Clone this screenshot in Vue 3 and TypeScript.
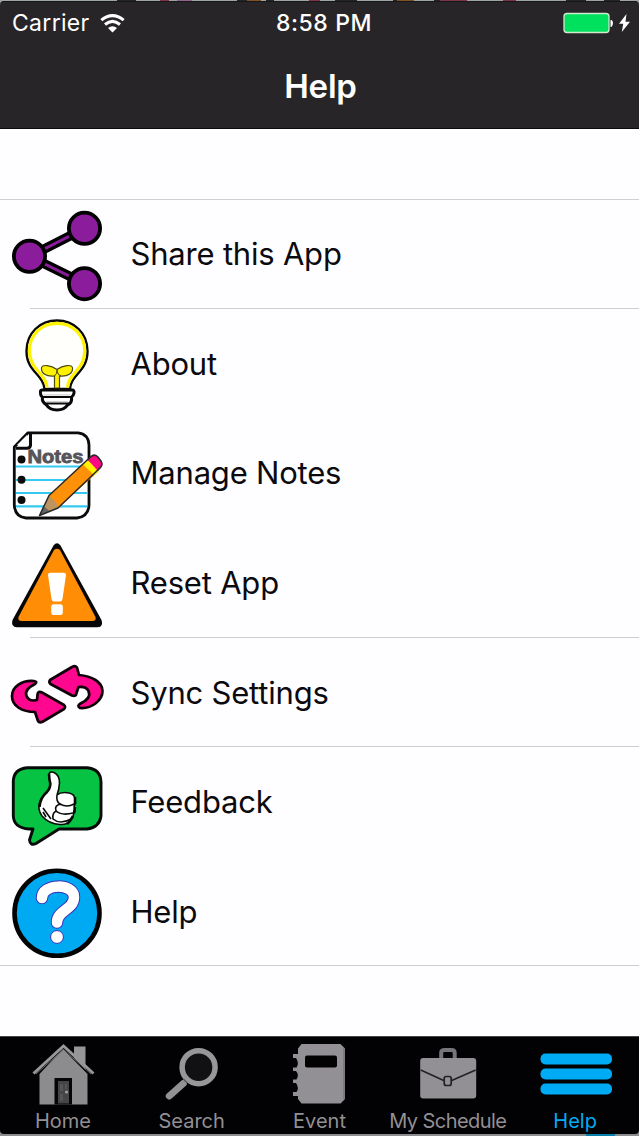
<script setup lang="ts">
interface MenuRow {
  id: string
  label: string
  top: number
}

interface Tab {
  id: string
  label: string
  active?: boolean
}

const rows: MenuRow[] = [
  { id: 'share', label: 'Share this App', top: 199 },
  { id: 'about', label: 'About', top: 309 },
  { id: 'notes', label: 'Manage Notes', top: 418 },
  { id: 'reset', label: 'Reset App', top: 528 },
  { id: 'sync', label: 'Sync Settings', top: 638 },
  { id: 'feedback', label: 'Feedback', top: 747 },
  { id: 'help', label: 'Help', top: 857 },
]

const tabs: Tab[] = [
  { id: 'home', label: 'Home' },
  { id: 'search', label: 'Search' },
  { id: 'event', label: 'Event' },
  { id: 'schedule', label: 'My Schedule' },
  { id: 'more', label: 'Help', active: true },
]
</script>

<template>
  <div class="screen">
    <header class="top">
      <svg class="backdrop" viewBox="0 0 639 4">
        <rect width="639" height="4" fill="#9fa3a1" />
        <path d="M117 0h19v2h-19zM237 0h14v2h-14zM266 0h8v2h-8zM335 0h22v2h-22zM393 0h14v2h-14zM434 0h12v2h-12zM566 0h20v2h-20zM604 0h16v2h-16z" fill="#242526" />
        <path d="M177 0h15v2h-15z" fill="#92648e" />
        <path d="M247 0h14v2h-14zM397 0h17v2h-17z" fill="#805326" />
        <path d="M160 0h9v2h-9zM309 0h11v2h-11zM440 0h27v2h-27zM503 0h13v2h-13z" fill="#7d3547" />
      </svg>
      <div class="chrome">
        <div class="status">
          <div class="carrier">
            <span>Carrier</span>
            <svg class="wifi" viewBox="100 11 26 21">
              <g fill="none" stroke="#fff" stroke-width="3">
                <path d="M101.300 18.200Q112.500 9 123.700 18.200" />
                <path d="M105 22.500Q112.500 16.200 120 22.500" />
              </g>
              <path d="M108 26Q112.500 22.300 117 26L112.500 30.500Z" fill="#fff" />
            </svg>
          </div>
          <span class="clock">8:58 PM</span>
          <svg class="battery" viewBox="562 10 70 24">
            <rect x="564" y="12.500" width="45" height="19" rx="3" fill="#00e25d" stroke="#d3e9ce" stroke-width="1.300" />
            <path d="M610.500 19h1q1.500 1 1.500 3t-1.500 4h-1z" fill="#fff" />
            <path d="M626.500 13L619 22.800h4.200L621.800 31 630 20.700h-4.500Z" fill="#fff" />
          </svg>
        </div>
        <h1>Help</h1>
      </div>
    </header>

    <main>
      <ul class="menu">
        <li v-for="row in rows" :key="row.id" :class="['row', row.id]">
          <svg class="icon" :viewBox="`0 ${row.top} 114 109`">
            <g v-if="row.id === 'share'">
              <path d="M84.500 228.500L29.500 256.500L84.500 283.500" fill="none" stroke="#000" stroke-width="9.500" />
              <path d="M84.500 228.500L29.500 256.500L84.500 283.500" fill="none" stroke="#8b1c9b" stroke-width="3" />
              <g fill="#8b1c9b" stroke="#000" stroke-width="3.800">
                <circle cx="84.500" cy="228.300" r="15.600" />
                <circle cx="29.500" cy="256.300" r="15.600" />
                <circle cx="84.500" cy="283.700" r="15.600" />
              </g>
            </g>

            <g v-else-if="row.id === 'about'">
              <path d="M44.500 389C43.500 374 26.500 372 26.500 351C26.500 333 40 320.500 57 320.500S87.500 333 87.500 351C87.500 372 71 374 70 389Z" fill="#fffffb" stroke="#080808" stroke-width="2.400" />
              <path d="M47 387.500C46 373 29.500 370 29.500 351C29.500 335 41 323.300 57 323.300S84.700 335 84.700 351C84.700 370 68.500 373 67.500 387.500" fill="none" stroke="#fff200" stroke-width="3.200" />
              <path d="M54.500 388V376C46 377 41 373 41.500 368C42 364 51 365 57 369.500C63 365 72 364 72.500 368C73 373 68 377 59.500 376V388Z" fill="#fff200" stroke="#4d4a14" stroke-width="1.200" />
              <path d="M54.500 376Q57 374 57 370Q57 375 61 376" fill="none" stroke="#4d4a14" />
              <path d="M42 390H72Q74.500 390 74 393Q73.500 396 71.500 397Q72.500 403 67.500 405Q64.500 410 57 410T46.500 405Q41.500 402 42.500 397Q40.500 396 40.500 393Q40 390 42 390Z" fill="#fff" stroke="#080808" stroke-width="3" />
              <path d="M42 397H73M44 403.500H70" stroke="#080808" stroke-width="2.200" />
              <path d="M44 394.800H70M46 401.500H68" stroke="#d1d1d1" stroke-width="1.200" />
            </g>

            <g v-else-if="row.id === 'notes'">
              <path d="M28 432.800H78Q88.500 434 89 445V505Q88.500 516.500 77 518H26Q15 517 14.300 505V447Z" fill="#fff" stroke="#0b0b0b" stroke-width="2.800" stroke-linejoin="round" />
              <path d="M16 466.500H87M16 480H87M16 493H87M16 506.300H87" stroke="#36c9f0" stroke-width="2.200" />
              <path d="M30.500 433.500V445.500Q30 448.200 27 448.200H16" fill="none" stroke="#0b0b0b" stroke-width="3" />
              <path d="M17 445L27 435V443Q27 445 25 445Z" fill="#fff" />
              <g fill="#0b0b0b">
                <circle cx="21.500" cy="459.500" r="4" />
                <circle cx="21.500" cy="479.800" r="4" />
                <circle cx="21.500" cy="500" r="4" />
              </g>
              <text x="27.500" y="463.300" textLength="56" lengthAdjust="spacingAndGlyphs" class="paper">Notes</text>
              <path d="M39.500 515.500L49 495.500L83.500 463.500L94.500 475L58 508Z" fill="#ff9108" />
              <path d="M39.500 515.500L49 495.500L53 499.500L56 502L58 508Z" fill="#bd9360" />
              <path d="M39.500 515.500L44 506.500L49.500 511Z" fill="#666" />
              <path d="M83 464.500L88 460L99 471L94.500 475.500Z" fill="#fff200" />
              <path d="M88 460L92 456Q94 454.500 97 456L101.500 461.500Q103.500 464 101.500 467L98 471Z" fill="#fc0885" />
              <path d="M39.500 515.500L49 495.500L90.500 457Q94 453.500 97.500 456.500L101 461Q103 464.500 100.500 467.500L58 508Z" fill="none" stroke="#282828" stroke-width="1.500" stroke-linejoin="round" />
            </g>

            <g v-else-if="row.id === 'reset'">
              <path d="M53.500 545.500Q57 541 60.500 545.500L101.500 620Q103 624.500 100.500 626.500Q100 627.200 97 627.200H17Q10.500 627 12.500 620Z" fill="#060606" />
              <path d="M54 550Q57 547.500 60 550L95.500 617Q96.500 620.500 93 621H21Q17.500 620.500 18.500 617Z" fill="#ff8d05" />
              <path d="M50 572.800H64Q66.200 573 66 575L62.500 599Q62 601.500 60 601.500H54Q52 601.500 51.500 599L48 575Q47.800 573 50 572.800Z" fill="#fff" />
              <rect x="51.200" y="604.300" width="11.600" height="10.700" rx="2.500" fill="#fff" />
            </g>

            <g v-else-if="row.id === 'sync'" fill="#ff078f" stroke="#100008" stroke-width="2.700" stroke-linejoin="round">
              <path d="M34 681C22 680 12 686.500 12 696C12 706 22 712 35 712L38 721Q39.500 723.500 43 721.500L64 709Q66 707 64 705L42 692.500Q38 690.500 37.500 694.500L37 700Q29 702 26.500 696C24.500 691 29 687 35 684Q38 681.500 34 681Z" />
              <path d="M80 708C92 709 102.500 700 102.500 691C102.500 682 91.500 676 79 675L77 667.500Q75 665 72 667L50 680Q48.500 682 50.500 684L72 695.500Q76 697 76.500 693L78.500 687Q86 686 88.500 691C91 697 86 701 80.500 703.500Q76.500 706 80 708Z" />
            </g>

            <g v-else-if="row.id === 'feedback'">
              <path d="M27 767.800H87Q100.500 769 101 782V816Q99.500 827.500 87 829H59L36 843.500Q30 846 29.500 840L33 829H29Q14 828 13.300 816V781Q14 769 27 767.800Z" fill="#06c344" stroke="#070b08" stroke-width="2.900" stroke-linejoin="round" />
              <path d="M49 774Q50 771 54 772.500Q59.500 775 59.500 783Q59 790 57 795Q61 791.500 69 793Q75 794 75 800Q76 804 74 806Q76 811 73.500 814Q73.500 818 70 820Q68 825 60 824.500Q49 824 42 816Q37 809 40 801Q42 796 48.500 790Q52 785 49 779Z" fill="#fff" stroke="#070b08" stroke-width="1.600" />
              <path d="M49 774L49.500 780Q52 786 47 792Q40 798 39.500 807" fill="none" stroke="#070b08" stroke-width="2.600" />
              <path d="M74 804Q67 808 60 804Q56 802 57 795M61 804Q54 805 56 811Q62 816 73 813M57 811Q52 812 53 819Q60 825 71 819M43 808L51 819M43 812L46 817" fill="none" stroke="#070b08" stroke-width="1.600" />
              <path d="M75 797V804M75 807L74 813M73 816L70 821L67 824" stroke="#070b08" stroke-width="2.600" fill="none" />
            </g>

            <g v-else>
              <circle cx="57" cy="913.200" r="42.500" fill="#00aaf2" stroke="#030303" stroke-width="4.600" />
              <path d="M42 898C42 883 74 883 74 897C74 910 57 910 57 922.500" fill="none" stroke="#3931b7" stroke-width="12.500" stroke-linecap="round" />
              <path d="M42 898C42 883 74 883 74 897C74 910 57 910 57 922.500" fill="none" stroke="#fff" stroke-width="10.500" stroke-linecap="round" />
              <circle cx="57" cy="937" r="6.400" fill="#fff" stroke="#3931b7" />
            </g>
          </svg>
          <span class="label">{{ row.label }}</span>
        </li>
      </ul>
    </main>

    <footer>
      <nav class="tabs">
        <a v-for="tab in tabs" :key="tab.id" :class="['tab', tab.id, { active: tab.active }]">
          <svg v-if="tab.id === 'home'" class="glyph" viewBox="32 1042 64 64">
            <path d="M39.500 1074L63 1049L87.500 1074V1104.500H39.500Z" fill="#8c8b8e" />
            <path d="M74 1046.500H85.500V1070L74 1058Z" fill="#969598" />
            <path d="M33.500 1073.500L63.500 1046L93.500 1073.500" fill="none" stroke="#979698" stroke-width="3" />
            <path d="M36 1074L63.500 1049.500L91 1074" fill="none" stroke="#69686a" />
            <rect x="54.500" y="1078" width="17.500" height="26.500" fill="#050505" />
            <rect x="58" y="1081" width="11" height="22.500" fill="#454446" />
            <path d="M60 1084h3v7h-3zM65 1084h2v5h-2zM60 1094h3v7h-3z" fill="#555456" />
            <circle cx="66.500" cy="1092" r="1.500" fill="#a3a2a5" />
          </svg>
          <svg v-else-if="tab.id === 'search'" class="glyph" viewBox="159.700 1042 64 64">
            <path d="M183 1083.500L169 1096" stroke="#929194" stroke-width="7" stroke-linecap="round" />
            <circle cx="198.300" cy="1067.200" r="16.500" fill="#111113" stroke="#979698" stroke-width="5.500" />
            <path d="M183 1079L187 1083" stroke="#555" stroke-width="1.200" />
          </svg>
          <svg v-else-if="tab.id === 'event'" class="glyph" viewBox="287.500 1042 64 64">
            <path d="M302 1044H341L345.500 1048.500V1099L341 1103.500H302L298.500 1099V1096H293.500V1092H297Q300 1088 296.500 1083H293.500V1079.500H297Q300 1075 296.500 1071H293.500V1067.500H297Q300 1063 296.500 1058H293.500V1054H298.500V1048.500Z" fill="#929094" />
            <path d="M344.500 1048V1099" stroke="#77757a" stroke-width="1.500" />
            <rect x="305.500" y="1055.500" width="32" height="12" rx="2" fill="#020203" />
          </svg>
          <svg v-else-if="tab.id === 'schedule'" class="glyph" viewBox="415.300 1042 64 64">
            <path d="M441.500 1059V1052.500Q441.500 1050 445 1050H452Q455 1050 455 1053V1059" fill="none" stroke="#77757a" stroke-width="4" />
            <rect x="420.500" y="1058" width="56" height="40.500" rx="3" fill="#929094" />
            <path d="M421 1070L444 1080.500M452 1080.500L476 1070" stroke="#222124" stroke-width="1.600" fill="none" />
            <rect x="444.500" y="1076.500" width="7" height="9" rx="2" fill="#929094" stroke="#222124" stroke-width="1.700" />
          </svg>
          <svg v-else class="glyph wide" viewBox="536 1042 78 64">
            <g fill="#00abf5">
              <rect x="540.500" y="1053.500" width="71.500" height="11" rx="5" />
              <rect x="540.500" y="1068.500" width="71.500" height="11" rx="5" />
              <rect x="540.500" y="1083.500" width="71.500" height="11" rx="5" />
            </g>
          </svg>
          <span class="caption">{{ tab.label }}</span>
        </a>
      </nav>
    </footer>
  </div>
</template>

<style scoped>
.screen {
  display: flex;
  flex-direction: column;
  height: 1136px;
  background: #fefdff;
  font-family: Inter, "Liberation Sans", sans-serif;
  color: #0b0a0e;
}

.top {
  position: relative;
  height: 129px;
  box-sizing: border-box;
  padding-top: 1px;
}

.backdrop {
  position: absolute;
  top: 0;
  left: 0;
  width: 639px;
  height: 4px;
}

.chrome {
  position: relative;
  height: 128px;
  box-sizing: border-box;
  border-top: 1px solid #151718;
  border-bottom: 1px solid #0b0a0c;
  border-radius: 4px 4px 0 0;
  background: #272528;
  color: #fff;
}

.status {
  display: grid;
  grid-template-columns: 1fr auto 1fr;
  align-items: center;
  height: 42px;
  padding: 0 7px 0 12px;
  font-size: 23px;
}

.carrier {
  display: flex;
  align-items: center;
  gap: 10px;
}

.carrier span {
  letter-spacing: 0.3px;
}

.wifi {
  width: 26px;
  height: 21px;
}

.clock {
  margin-left: 4px;
  font-weight: 500;
  letter-spacing: 0.6px;
}

.battery {
  width: 70px;
  height: 24px;
  justify-self: end;
}

h1 {
  margin: 20px 0 0;
  padding-left: 2px;
  line-height: 44px;
  font-size: 33px;
  font-weight: 600;
  text-align: center;
  letter-spacing: -0.2px;
}

main {
  flex: 1;
  padding-top: 70px;
}

.menu {
  margin: 0;
  padding: 0;
  list-style: none;
  box-shadow: inset 0 1px #d0ced3;
}

.row {
  display: flex;
  align-items: flex-start;
  height: 110px;
  box-sizing: border-box;
}

.about,
.sync,
.help {
  height: 109px;
}

.icon {
  width: 114px;
  height: 109px;
  margin-right: 16.500px;
  flex: none;
}

.help .icon {
  margin-bottom: -1px;
}

.share,
.reset,
.sync {
  background: linear-gradient(#cfcdd1, #cfcdd1) 30px 100% / 100% 1px no-repeat;
}

.help {
  border-bottom: 1px solid #cfcdd1;
}

.label {
  font-size: 31px;
  line-height: 109px;
  letter-spacing: -0.2px;
}

.paper {
  font: bold 18px "Liberation Sans", sans-serif;
  fill: #565459;
  stroke: #565459;
  stroke-width: 0.8px;
}

footer {
  height: 100px;
  box-sizing: border-box;
  padding-bottom: 2px;
  background: linear-gradient(90deg, #8d8c90 586px, #087fa9 586px, #087fa9 615px, #8d8c90 615px);
}

.tabs {
  display: grid;
  grid-template-columns: repeat(5, 1fr);
  height: 98px;
  box-sizing: border-box;
  border-top: 1px solid #454446;
  border-radius: 0 0 4px 4px;
  background: #020103;
}

.tab {
  display: flex;
  flex-direction: column;
  align-items: center;
  padding-top: 5px;
  color: #929094;
}

.tab.active {
  color: #00abf5;
}

.glyph {
  width: 64px;
  height: 64px;
  flex: none;
}

.wide {
  width: 78px;
}

.caption {
  margin-top: 2.500px;
  font-size: 20px;
  line-height: 24px;
  white-space: nowrap;
}

.home .caption {
  padding-right: 2px;
}

.schedule .caption {
  padding-left: 1px;
  letter-spacing: -0.550px;
}
</style>

<style>
body {
  margin: 0;
  overflow: hidden;
}
</style>
